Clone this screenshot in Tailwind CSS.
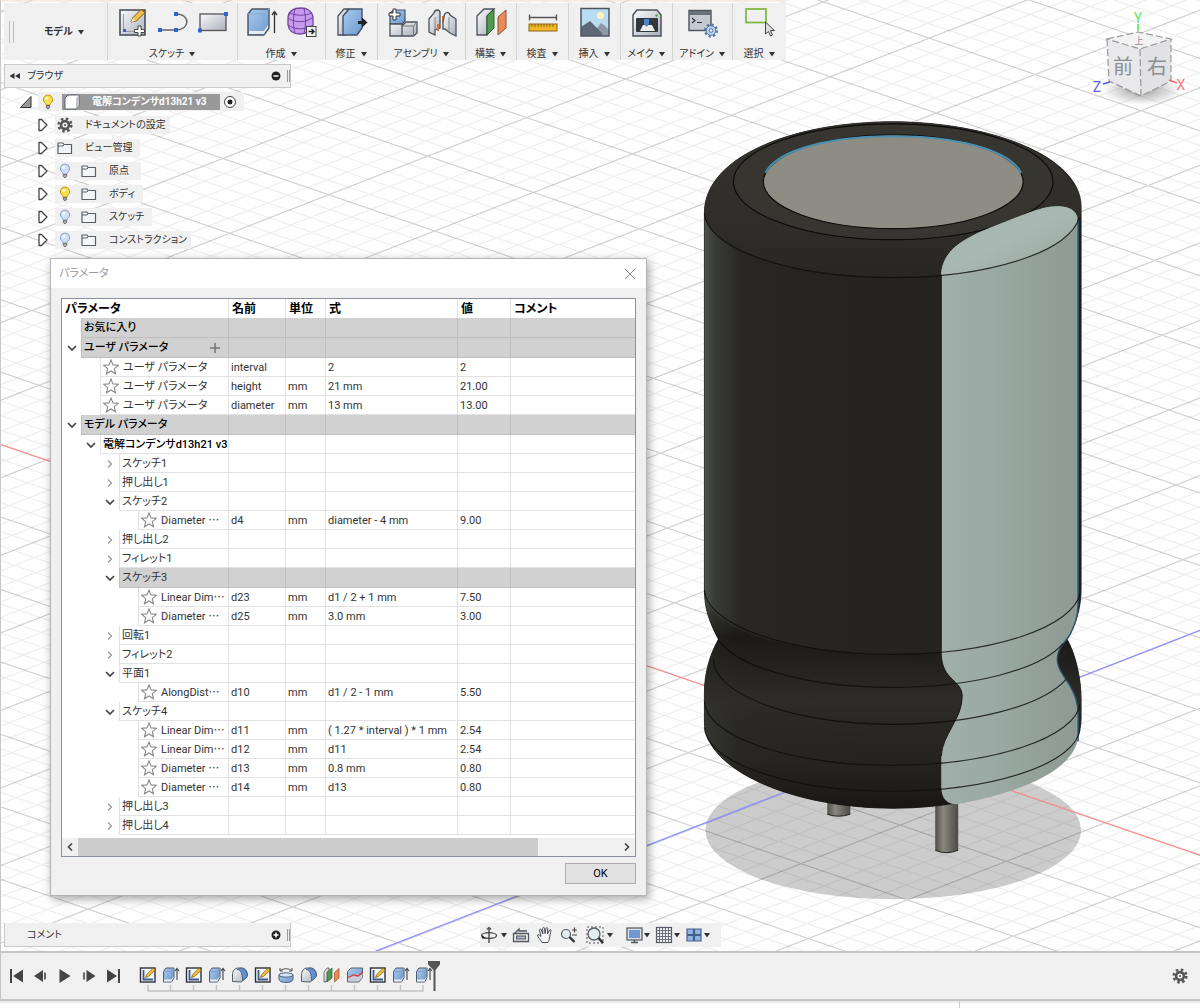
<!DOCTYPE html>
<html lang="ja">
<head>
    <meta charset="UTF-8">
    <meta name="viewport" content="width=device-width, initial-scale=1">
    <title>電解コンデンサd13h21 v3</title>
    <script src="https://cdn.jsdelivr.net/npm/@tailwindcss/browser@4"></script>
</head>
<body class="h-screen min-h-[960px] flex flex-col overflow-hidden bg-white text-[10px] leading-none text-[#333] font-['Roboto','Noto_Sans_CJK_JP',sans-serif] [font-feature-settings:'palt']">

<!-- shared icons -->
<svg class="absolute w-0 h-0" aria-hidden="true">
    <defs>
        <linearGradient id="steel" x1="0" y1="0" x2="1" y2="1"><stop offset="0" stop-color="#fbfbfc"/><stop offset="1" stop-color="#a9afba"/></linearGradient>
        <linearGradient id="blue" x1="0" y1="0" x2="1" y2="1"><stop offset="0" stop-color="#a9caee"/><stop offset="1" stop-color="#6e9acf"/></linearGradient>
    </defs>
    <symbol id="caret" viewBox="0 0 8 6"><path d="M1 1h6L4 5.500z" fill="#333"/></symbol>
    <symbol id="star" viewBox="0 0 16 16"><path d="M8 1l2 4.900 5.300.4-4 3.400 1.200 5.100L8 12l-4.500 2.800 1.200-5.100-4-3.400 5.300-.4z" fill="#fff" stroke="#8a8a8a" stroke-width="1.100"/></symbol>
    <symbol id="tri" viewBox="0 0 12 14"><path d="M2 1.500v11h2.500L10 7 4.500 1.500z" fill="#fff" stroke="#444" stroke-width="1.300" stroke-linejoin="round"/></symbol>
    <symbol id="folder" viewBox="0 0 16 14"><path d="M1 12.500V2h5l1 1.500h7.500v9z" fill="#f4f5f7" stroke="#5a6068" stroke-width="1.200" stroke-linejoin="round"/><path d="M1 5h5l1.500-1.500" fill="none" stroke="#5a6068"/></symbol>
    <symbol id="bulb-on" viewBox="0 0 12 16"><path d="M6 1a4.600 4.600 0 0 0-2.500 8.500l.6 1.500h3.800l.6-1.500A4.600 4.600 0 0 0 6 1z" fill="#f7df4e" stroke="#c39a1c"/><circle cx="4.700" cy="4.300" r="1.500" fill="#fffbd5"/><path d="M4.300 11.500h3.400v2L6 15l-1.700-1.500z" fill="#999" stroke="#555" stroke-width=".7"/></symbol>
    <symbol id="bulb-off" viewBox="0 0 12 16"><path d="M6 1a4.600 4.600 0 0 0-2.500 8.500l.6 1.500h3.800l.6-1.500A4.600 4.600 0 0 0 6 1z" fill="#cfdffa" stroke="#8a9fcb"/><circle cx="4.700" cy="4.300" r="1.500" fill="#fff"/><path d="M4.300 11.500h3.400v2L6 15l-1.700-1.500z" fill="#aaa" stroke="#555" stroke-width=".7"/></symbol>
    <symbol id="gear" viewBox="0 0 16 16"><circle cx="8" cy="8" r="6.300" fill="none" stroke="#555" stroke-width="2.600" stroke-dasharray="2.500 2.450"/><circle cx="8" cy="8" r="3.900" fill="none" stroke="#555" stroke-width="2.600"/><circle cx="8" cy="8" r="1" fill="#555"/></symbol>
    <symbol id="t-sketch" viewBox="0 0 18 18"><rect x="1.500" y="2" width="14.500" height="14" fill="#f7f7f7" stroke="#2b2f38" stroke-width="1.400"/><path d="M4.500 4v9.500H14" fill="none" stroke="#3a5b88" stroke-width="1.800"/><path d="M6.500 11.500l1-2.800L14.300 2l2 2-6.900 6.600z" fill="#f5c431" stroke="#6b4a12" stroke-width=".7"/></symbol>
    <symbol id="t-extrude" viewBox="0 0 18 18"><path d="M1.500 5.500L4 2h8v9.500L9.500 16h-8z" fill="url(#blue)" stroke="#4f5b6b"/><path d="M1.500 5.500h8L12 2M9.500 5.500V16" fill="none" stroke="#7d9cc4" stroke-width=".8"/><path d="M2 13.500h7.500l2-3v1L9.300 15.500H2z" fill="#eceef2"/><path d="M15 14V3m-2 2l2-2.500L17 5" fill="none" stroke="#444" stroke-width="1.100"/></symbol>
    <symbol id="t-fillet" viewBox="0 0 18 18"><path d="M1.500 15.500V9c0-4 2-7 6-7h3c4 0 6 3.500 6 7.500L14 13l-4 3z" fill="url(#steel)" stroke="#555c68"/><path d="M6 3.500C10 4 11.500 8 11.500 14.500l4.500-3.500c.5-5-2-8.500-6-9z" fill="#5f92cf" stroke="#3e5d89" stroke-width=".8"/></symbol>
    <symbol id="t-revolve" viewBox="0 0 18 18"><path d="M2 9v4c0 2 3 3.500 7 3.500s7-1.500 7-3.500V9z" fill="url(#blue)" stroke="#475e7d"/><ellipse cx="9" cy="9" rx="7" ry="2.200" fill="#d4e3f5" stroke="#475e7d"/><path d="M3 5c2-3 10-3 12 0M3 2v3h3M15 2v3h-3" fill="none" stroke="#555"/></symbol>
    <symbol id="t-plane" viewBox="0 0 18 18"><path d="M1 6l3-4h2v10l-3 4H1z" fill="url(#steel)" stroke="#555" stroke-width=".8"/><path d="M4 6l5-4v10l-5 4z" fill="#4f9a4d" stroke="#38683a" stroke-width=".8"/><path d="M11.500 6.500l4.500-4v9.500l-4.500 4z" fill="#ea8a57" stroke="#a65a32" stroke-width=".8"/></symbol>
    <symbol id="t-split" viewBox="0 0 18 18"><path d="M1.500 5.500L5 2h11.500v9.500L13 16H1.500z" fill="url(#blue)" stroke="#56606f"/><path d="M2 11l3.500 0 3-2 4 2 4-4v4.500L13 15.500H2z" fill="#c8ccd4"/><path d="M1.500 11c4 1 4-3 7-2s4 2 8-3" fill="none" stroke="#dd3a33" stroke-width="1.300"/></symbol>
</svg>

<main class="relative flex-1 min-h-0 flex flex-col overflow-hidden border-l border-[#c8c8c8]">
    <!-- 3D viewport -->
    <svg class="absolute inset-0 w-full h-full" viewBox="0 0 1200 952" preserveAspectRatio="xMidYMid slice" aria-label="電解コンデンサ">
        <defs>
            <pattern id="grid" width="100" height="100" patternUnits="userSpaceOnUse" patternTransform="matrix(1.060 .363 .99 -.386 893 751)">
                <path d="M20 0V100M40 0V100M60 0V100M80 0V100M0 20H100M0 40H100M0 60H100M0 80H100" stroke="#000" stroke-opacity=".065" stroke-width="1.500"/>
                <path d="M0 0V100M100 0V100M0 0H100M0 100H100" stroke="#000" stroke-opacity=".16" stroke-width="1.800"/>
            </pattern>
            <linearGradient id="dark"><stop offset="0" stop-color="#50544c"/><stop offset=".025" stop-color="#3b3d37"/><stop offset=".09" stop-color="#292825"/><stop offset=".2" stop-color="#262522"/><stop offset="1" stop-color="#232220"/></linearGradient>
            <linearGradient id="cap" x1="0" y1="0" x2="0" y2="1"><stop offset="0" stop-color="#35332e"/><stop offset=".7" stop-color="#2f2d29"/><stop offset="1" stop-color="#272623"/></linearGradient>
            <linearGradient id="belt" x1="0" y1="0" x2="0" y2="1"><stop offset="0" stop-color="#232220" stop-opacity="0"/><stop offset=".2" stop-color="#181715" stop-opacity=".8"/><stop offset=".5" stop-color="#2e2d2a" stop-opacity=".9"/><stop offset=".75" stop-color="#262522" stop-opacity=".4"/><stop offset="1" stop-color="#151412" stop-opacity=".9"/></linearGradient>
            <linearGradient id="stripe"><stop offset="0" stop-color="#a1afab"/><stop offset=".35" stop-color="#9caaa5"/><stop offset=".75" stop-color="#92a099"/><stop offset="1" stop-color="#8e9a94"/></linearGradient>
            <linearGradient id="stripe-top" x1="0" y1="0" x2="1" y2="1"><stop offset="0" stop-color="#a3b2ad"/><stop offset=".5" stop-color="#a9b8b2"/><stop offset="1" stop-color="#93a19a"/></linearGradient>
            <linearGradient id="pin" gradientUnits="userSpaceOnUse" x1="0" x2="23" spreadMethod="pad"><stop offset="0" stop-color="#504f4a"/><stop offset=".35" stop-color="#8a8880"/><stop offset="1" stop-color="#4a4944"/></linearGradient>
        </defs>
        <rect width="1200" height="952" fill="#fefefe"/>
        <ellipse cx="893" cy="831" rx="188" ry="69" fill="#ccc"/>
        <rect width="1200" height="952" fill="url(#grid)"/>
        <path d="M0 445L1200 856" stroke="#ff8f8f" stroke-width="1.200"/>
        <path d="M375 952L1200 631" stroke="#9090ff" stroke-width="1.200"/>
        <path d="M0 1h786" stroke="#f7d9d0"/>

        <g transform="translate(827 0)"><path d="M0 800v15q11 4 23 0v-15z" fill="url(#pin)"/><path d="M0 815q11 4 23 0" fill="none" stroke="#222"/></g>
        <g transform="translate(935 0)"><path d="M0 800v51q11 5 23 0v-51z" fill="url(#pin)"/><path d="M0 851q11 5 23 0" fill="none" stroke="#222"/></g>
        <path d="M704 213C704 156 795 122 892 122S1081 156 1081 207V590C1081 610 1075 626 1067 640C1076 656 1081 680 1081 700V720C1081 770 995 809 893 809S704 770 704 723V693C704 675 709 656 718 640C709 622 704 610 704 590z" fill="url(#dark)" stroke="#111" stroke-width=".8"/>
        <path d="M704 213C704 156 795 122 892 122S1081 156 1081 210C1081 247 997 278 893 278S704 247 704 213z" fill="url(#cap)"/>
        <path d="M705 594C708 631 790 655 893 655S1078 631 1081 594C1080 612 1075 626 1067 640C1076 656 1081 680 1081 700V720C1081 770 995 809 893 809S704 770 704 723V693C704 675 709 656 718 640C709 624 705 610 705 594z" fill="url(#belt)"/>
        <ellipse cx="893" cy="182" rx="160" ry="58" fill="#363530" stroke="#0b0b0a" stroke-width="1.200"/>
        <ellipse cx="893" cy="182" rx="130" ry="47" fill="#8e8d84" stroke="#0e0e0c" stroke-width="1.200"/>
        <path d="M765 173C778 149 832 136.500 893 136.500S1008 149 1021 173" fill="none" stroke="#4a8fb0" stroke-width="2"/>

        <path d="M941 275C942 250 965 238 990 228C1015 219 1032 210 1050 207C1064 205 1078 208 1078 224V600C1078 614 1077 621 1070 635C1066 642 1060 646 1058 654C1055 664 1060 672 1067 682C1075 694 1078 703 1078 716V738C1074 772 1018 794 957 805C947 805 941 800 941 787V757C942 735 962 720 962 697C962 680 942 682 941 655z" fill="url(#stripe)"/>
        <path d="M941 275C942 250 965 238 990 228C1015 219 1032 210 1050 207C1064 205 1078 208 1078 222C1066 248 1010 270 941 275z" fill="url(#stripe-top)"/>
        <path d="M941 655C942 682 962 680 962 697C962 720 942 735 941 757M941 275V655" fill="none" stroke="#171614"/>
        <path d="M1078 218V600C1078 614 1077 621 1070 635C1066 642 1060 646 1058 654C1055 664 1060 672 1067 682C1075 694 1078 703 1078 716V742" fill="none" stroke="#2b5468" stroke-width="1.400"/>
        <g fill="none" stroke="#0d0d0c" stroke-opacity=".8" stroke-width="1.200">
            <path d="M704 213A188.500 66 0 0 0 893 278A188.500 66 0 0 0 1079 218"/>
            <path d="M704 590A188 66 0 0 0 893 655A188 66 0 0 0 1080 594"/>
            <path d="M718 640A176 61 0 0 0 893 688A176 61 0 0 0 1063 644"/>
            <path d="M713 660A181 65 0 0 0 893 725A181 65 0 0 0 1066 680"/>
            <path d="M704 702A188 65 0 0 0 893 766A188 65 0 0 0 1080 705"/>
            <path d="M704 728A188 65 0 0 0 893 792A188 65 0 0 0 1080 730"/>
        </g>
    </svg>

    <!-- view cube -->
    <svg class="absolute top-2 right-2 w-[104px] h-[104px] font-['Noto_Sans_CJK_JP',sans-serif]" viewBox="1088 8 104 104">
        <defs><radialGradient id="cs"><stop offset="0" stop-opacity=".35"/><stop offset="1" stop-opacity="0"/></radialGradient></defs>
        <ellipse cx="1142" cy="91" rx="40" ry="14" fill="url(#cs)"/>
        <path d="M1107 39L1138 32L1171 39L1140 49z" fill="#f3f3f3"/>
        <path d="M1107 39L1140 49L1141 96L1109 81z" fill="#e9e9eb"/>
        <path d="M1171 39L1140 49L1141 96L1171 81z" fill="#e2e2e4"/>
        <path d="M1107 39L1138 32L1171 39L1140 49zM1107 39L1109 81L1141 96L1171 81V39M1140 49L1141 96" fill="none" stroke="#999" stroke-width="1.200" stroke-dasharray="7 3"/>
        <path d="M1138 24v7" stroke="#4be34b" stroke-width="1.500"/>
        <path d="M1103 84l7-2" stroke="#5353f2" stroke-width="1.500"/>
        <path d="M1169 80l8 3" stroke="#f27070" stroke-width="1.500"/>
        <g text-anchor="middle" fill="#8b8e93">
            <text x="1123" y="74" font-size="20">前</text>
            <text x="1157" y="74" font-size="20">右</text>
            <text x="1139" y="44" font-size="9">上</text>
        </g>
        <g text-anchor="middle" font-size="14" font-family="Roboto">
            <text x="1138" y="23" fill="#5fe85f">Y</text>
            <text x="1097" y="92" fill="#5f5ff5">Z</text>
            <text x="1181" y="90" fill="#f57a7a">X</text>
        </g>
    </svg>

    <!-- toolbar -->
    <nav class="relative self-start flex h-[57px] mt-[3px] ml-[3px] bg-[#f0f0f0] divide-x divide-[#d4d4d4]">
        <div class="w-[104px] flex items-center pl-[5px]">
            <span class="w-[5px] h-[22px] border-x border-[#bbb]"></span>
            <button class="flex-1 flex items-center justify-center gap-1 pl-2 font-bold">モデル <svg class="w-2 h-1.5"><use href="#caret"/></svg></button>
        </div>
        <div class="w-[130px] flex flex-col items-center justify-between pt-1 pb-px">
            <div class="flex gap-2">
                <button aria-label="スケッチを作成"><svg class="w-8 h-8" viewBox="0 0 32 32"><rect x="3" y="3" width="25" height="25" fill="url(#steel)" stroke="#4c525c" stroke-width="1.600"/><path d="M6.500 7v17.500H24" fill="none" stroke="#999"/><rect x="6" y="22" width="3" height="3" fill="#2d62c8"/><path d="M14 15l2-4.500 8-8 4 3-8.500 8.500z" fill="#f4c04c" stroke="#80571d"/><path d="M14 15l4.500-1-2.500-3z" fill="#fff1cc"/><path d="M21 19h3v3.500h3.500v3H24V29h-3v-3.500h-3.500v-3H21z" fill="#fff" stroke="#444"/></svg></button>
                <button aria-label="線分"><svg class="w-8 h-8" viewBox="0 0 32 32"><path d="M3 23h16.500M19 7c15 0 14 16 0 16" fill="none" stroke="#666" stroke-width="1.500"/><path d="M1 21h4v4H1zM17 21h4v4h-4zM17 5h4v4h-4z" fill="#2d66d0"/></svg></button>
                <button aria-label="長方形"><svg class="w-8 h-8" viewBox="0 0 32 32"><rect x="3" y="7" width="26" height="16.500" fill="url(#steel)" stroke="#555" stroke-width="1.300"/><path d="M27 5h4v4h-4zM1 21.500h4v4H1z" fill="#2d66d0"/></svg></button>
            </div>
            <button class="flex items-center gap-1">スケッチ <svg class="w-2 h-1.5"><use href="#caret"/></svg></button>
        </div>
        <div class="w-[88px] flex flex-col items-center justify-between pt-1 pb-px">
            <div class="flex gap-2">
                <button aria-label="押し出し"><svg class="w-8 h-8" viewBox="0 0 32 32"><path d="M2 7l4-5h17v19l-5 7H2z" fill="url(#blue)" stroke="#485567" stroke-width="1.400"/><path d="M2 7h16l5-5M18 7v21" fill="none" stroke="#86a7d0"/><path d="M3 24h15l4-6v3l-4.500 6H3z" fill="#e9ebef"/><path d="M28.500 26V5m-2.500 3l2.500-3.500L31 8" fill="none" stroke="#333" stroke-width="1.300"/></svg></button>
                <button aria-label="フォームを作成"><svg class="w-8 h-8" viewBox="0 0 32 32"><path d="M2 10C3 3 9 1 15 1s11 3 12 9v8c-1 6-7 9-13 9S3 25 2 18z" fill="#c79af0" stroke="#70459c" stroke-width="1.300"/><path d="M2 11c6 5 19 5 25-1M2 18c6 5 19 5 25 0M9 2c-2 7-2 18 0 24M18 1.500c2 7 2 18 0 25M4 6c6 3 16 3 21 0" fill="none" stroke="#70459c"/><rect x="20.500" y="19.500" width="9.500" height="10" fill="#eee" stroke="#444"/><path d="M22.500 24.500h5m-2-2.500l2.500 2.500-2.500 2.500" fill="none" stroke="#222" stroke-width="1.400"/></svg></button>
            </div>
            <button class="flex items-center gap-1">作成 <svg class="w-2 h-1.5"><use href="#caret"/></svg></button>
        </div>
        <div class="w-[52px] flex flex-col items-center justify-between pt-1 pb-px">
            <button aria-label="プレス/プル"><svg class="w-8 h-8" viewBox="0 0 32 32"><path d="M2 9l6-7h4L9 9v19H2z" fill="url(#steel)" stroke="#4c525c" stroke-width="1.300"/><path d="M7 9l6-7h13v19l-5 7H7z" fill="url(#blue)" stroke="#42536b" stroke-width="1.400"/><path d="M22 14h4v-3.500l5.500 5-5.500 5V17h-4z" fill="#222"/></svg></button>
            <button class="flex items-center gap-1">修正 <svg class="w-2 h-1.5"><use href="#caret"/></svg></button>
        </div>
        <div class="w-[88px] flex flex-col items-center justify-between pt-1 pb-px">
            <div class="flex gap-2">
                <button aria-label="新規コンポーネント"><svg class="w-8 h-8" viewBox="0 0 32 32"><path d="M4 6l4-3h11v11l-3 3H4z" fill="url(#blue)" stroke="#42536b" stroke-width="1.200"/><path d="M4 17h12v12H4zM16 19l4-4h11v11l-3.500 3H16z" fill="url(#steel)" stroke="#4c525c" stroke-width="1.300"/><path d="M16 19h11.500l3.500-4M27.500 19v10" fill="none" stroke="#777"/><path d="M7 2h3v4h4v3h-4v4H7V9H3V6h4z" fill="#fff" stroke="#333"/></svg></button>
                <button aria-label="ジョイント"><svg class="w-8 h-8" viewBox="0 0 32 32"><path d="M3 12l5-6c1-4 6-4 6 0v15l-5 2v5l-6-3z" fill="url(#steel)" stroke="#4c525c" stroke-width="1.300"/><path d="M9 10v16" stroke="#888"/><path d="M12 17v7M17 9v7" stroke="#e5742a" stroke-width="2"/><path d="M18 10c0-5 5-6 6-2l6 4v17l-6-3-5-4h-2v-7z" fill="url(#steel)" stroke="#4c525c" stroke-width="1.300"/><path d="M23 10v15" stroke="#888"/></svg></button>
            </div>
            <button class="flex items-center gap-1">アセンブリ <svg class="w-2 h-1.5"><use href="#caret"/></svg></button>
        </div>
        <div class="w-[51px] flex flex-col items-center justify-between pt-1 pb-px">
            <button aria-label="オフセット平面"><svg class="w-8 h-8" viewBox="0 0 32 32"><path d="M2 9l7-7h10l-7 7v19H2z" fill="url(#steel)" stroke="#4c525c" stroke-width="1.300"/><path d="M12 9l7-7v19l-7 7z" fill="#4f9a4d" stroke="#2e5c30"/><path d="M23 10l8-7v18l-8 7z" fill="#ea8a57" stroke="#8b5030"/></svg></button>
            <button class="flex items-center gap-1">構築 <svg class="w-2 h-1.5"><use href="#caret"/></svg></button>
        </div>
        <div class="w-[52px] flex flex-col items-center justify-between pt-1 pb-px">
            <button aria-label="計測"><svg class="w-8 h-8" viewBox="0 0 32 32"><path d="M2.500 10.500h27M2.500 7.500v6M29.500 7.500v6" stroke="#555" stroke-width="1.400"/><rect x="2" y="17" width="28" height="7" fill="#f0b92c" stroke="#8a6413"/><path d="M5 17v3M8 17v3M11 17v3M14 17v3M17 17v3M20 17v3M23 17v3M26 17v3" stroke="#8a6413"/></svg></button>
            <button class="flex items-center gap-1">検査 <svg class="w-2 h-1.5"><use href="#caret"/></svg></button>
        </div>
        <div class="w-[52px] flex flex-col items-center justify-between pt-1 pb-px">
            <button aria-label="キャンバス"><svg class="w-8 h-8" viewBox="0 0 32 32"><rect x="2" y="1.500" width="28" height="27.500" fill="#b9dcf0"/><circle cx="21.500" cy="8.500" r="3.500" fill="#fdf2b8"/><path d="M15 25l7-9 3 2 5 5v6H15z" fill="#8e98a5"/><path d="M2 20l9-6 12 12v3H2z" fill="#5c6876"/><rect x="2" y="1.500" width="28" height="27.500" fill="none" stroke="#4c5662" stroke-width="1.500"/></svg></button>
            <button class="flex items-center gap-1">挿入 <svg class="w-2 h-1.5"><use href="#caret"/></svg></button>
        </div>
        <div class="w-[52px] flex flex-col items-center justify-between pt-1 pb-px">
            <button aria-label="3D プリント"><svg class="w-8 h-8" viewBox="0 0 32 32"><path d="M2 8l4-5h20l4 5v21H2z" fill="url(#steel)" stroke="#4c525c" stroke-width="1.500"/><rect x="5" y="11" width="22" height="14" rx="1" fill="#33373d"/><path d="M9 24l3-6h9l3 6z" fill="#eceef0"/><path d="M13 12h5v5l-2.500 3-2.500-3z" fill="#4a86cc"/><circle cx="25.500" cy="8.500" r="1.200" fill="#3fae3f"/></svg></button>
            <button class="flex items-center gap-1">メイク <svg class="w-2 h-1.5"><use href="#caret"/></svg></button>
        </div>
        <div class="w-[60px] flex flex-col items-center justify-between pt-1 pb-px">
            <button aria-label="スクリプトとアドイン"><svg class="w-8 h-8" viewBox="0 0 32 32"><rect x="2" y="3.500" width="22" height="20" fill="#c5c9d1" stroke="#4c525c" stroke-width="1.400"/><path d="M2 4h22v4H2z" fill="#6a7079"/><path d="M5 11l3 2.500L5 16M10 15.500h5" fill="none" stroke="#333" stroke-width="1.200"/><circle cx="24" cy="23.500" r="5.800" fill="none" stroke="#5679a8" stroke-width="2.400" stroke-dasharray="2.300 2.200"/><circle cx="24" cy="23.500" r="4.800" fill="#b6cfee" stroke="#5679a8"/><circle cx="24" cy="23.500" r="1.800" fill="#f0f0f0" stroke="#5679a8"/></svg></button>
            <button class="flex items-center gap-1">アドイン <svg class="w-2 h-1.5"><use href="#caret"/></svg></button>
        </div>
        <div class="w-[53px] flex flex-col items-center justify-between pt-1 pb-px">
            <button aria-label="選択"><svg class="w-8 h-8" viewBox="0 0 32 32"><rect x="2" y="2" width="20" height="13.500" fill="none" stroke="#7cb53a" stroke-width="1.700"/><path d="M21.500 15v12l3-2.500 2 4.500 2-1-2-4.500h4z" fill="#ddd" stroke="#444"/></svg></button>
            <button class="flex items-center gap-1">選択 <svg class="w-2 h-1.5"><use href="#caret"/></svg></button>
        </div>
    </nav>

    <!-- browser panel -->
    <section class="relative w-[287px] mt-1 ml-[3px]">
        <header class="h-[24px] flex items-center pl-1 bg-[#f0f0f0] border border-[#c9c9c9]">
            <button aria-label="折りたたむ"><svg class="w-3 h-3" viewBox="0 0 12 12"><path d="M5.500 3v6L.5 6zM11 3v6L6 6z" fill="#333"/></svg></button>
            <h2 class="ml-1.5 flex-1">ブラウザ</h2>
            <button aria-label="表示設定"><svg class="w-2.5 h-2.5" viewBox="0 0 10 10"><circle cx="5" cy="5" r="4.500" fill="#222"/><path d="M2.500 5h5" stroke="#fff" stroke-width="1.500"/></svg></button>
            <span class="ml-1.5 w-[3px] h-3 border-x border-[#999]"></span>
        </header>
        <ul class="pt-[2px]">
            <li class="h-[23px] flex items-center gap-1.5 pl-4">
                <svg class="w-3 h-3" viewBox="0 0 12 12"><path d="M.5 11.500L11 .5v11z" fill="#999" stroke="#333"/></svg>
                <div class="h-[19px] flex items-center pl-1 pr-2 bg-[#f0f0f0]">
                    <svg class="w-3 h-4 mr-2"><use href="#bulb-on"/></svg>
                    <button class="h-4 w-[158px] flex items-center bg-[#999] text-white font-bold">
                        <svg class="w-4 h-4 ml-0.5 mr-3" viewBox="0 0 16 16"><path d="M1 4l3-3h11v10.500L12 15H1z" fill="#fff" stroke="#5b6068"/><path d="M12 15V4l3-3v10.500z" fill="#bfc4cc"/></svg>
                        電解コンデンサd13h21 v3
                    </button>
                    <input type="radio" checked aria-label="コンポーネントをアクティブ化" class="ml-1 w-3 h-3 appearance-none rounded-full border border-[#444] bg-[radial-gradient(#222_30%,#fff_40%)]">
                </div>
            </li>
            <li class="h-[23px] flex items-center gap-1.5 pl-[33px]">
                <svg class="w-3 h-3.5"><use href="#tri"/></svg>
                <div class="h-[18px] flex items-center pl-0.5 pr-1 bg-[#f0f0f0]"><svg class="w-4 h-4 mr-3"><use href="#gear"/></svg>ドキュメントの設定</div>
            </li>
            <li class="h-[23px] flex items-center gap-1.5 pl-[33px]">
                <svg class="w-3 h-3.5"><use href="#tri"/></svg>
                <div class="h-[18px] flex items-center pl-0.5 pr-2 bg-[#f0f0f0]"><svg class="w-4 h-3.5 mr-3"><use href="#folder"/></svg>ビュー管理</div>
            </li>
            <li class="h-[23px] flex items-center gap-1.5 pl-[33px]">
                <svg class="w-3 h-3.5"><use href="#tri"/></svg>
                <div class="h-[18px] flex items-center pl-1 pr-3 bg-[#f0f0f0]"><svg class="w-3 h-4 mr-2.5"><use href="#bulb-off"/></svg><svg class="w-4 h-3.5 mr-3"><use href="#folder"/></svg>原点</div>
            </li>
            <li class="h-[23px] flex items-center gap-1.5 pl-[33px]">
                <svg class="w-3 h-3.5"><use href="#tri"/></svg>
                <div class="h-[18px] flex items-center pl-1 pr-2 bg-[#f0f0f0]"><svg class="w-3 h-4 mr-2.5"><use href="#bulb-on"/></svg><svg class="w-4 h-3.5 mr-3"><use href="#folder"/></svg>ボディ</div>
            </li>
            <li class="h-[23px] flex items-center gap-1.5 pl-[33px]">
                <svg class="w-3 h-3.5"><use href="#tri"/></svg>
                <div class="h-[18px] flex items-center pl-1 pr-2 bg-[#f0f0f0]"><svg class="w-3 h-4 mr-2.5"><use href="#bulb-off"/></svg><svg class="w-4 h-3.5 mr-3"><use href="#folder"/></svg>スケッチ</div>
            </li>
            <li class="h-[23px] flex items-center gap-1.5 pl-[33px]">
                <svg class="w-3 h-3.5"><use href="#tri"/></svg>
                <div class="h-[18px] flex items-center pl-1 pr-1 bg-[#f0f0f0]"><svg class="w-3 h-4 mr-2.5"><use href="#bulb-off"/></svg><svg class="w-4 h-3.5 mr-3"><use href="#folder"/></svg>コンストラクション</div>
            </li>
        </ul>
    </section>

    <!-- comments and navigation bars -->
    <div class="relative mt-auto grid grid-cols-[1fr_auto_1fr] pl-[3px] pr-1 pb-1">
        <section class="w-[287px] h-[24px] flex items-center pl-[22px] bg-[#f0f0f0] border border-t-0 border-[#c9c9c9]">
            <h2 class="flex-1">コメント</h2>
            <button aria-label="コメントを追加"><svg class="w-2.5 h-2.5" viewBox="0 0 10 10"><circle cx="5" cy="5" r="4.500" fill="#222"/><path d="M2.500 5h5M5 2.500v5" stroke="#fff" stroke-width="1.500"/></svg></button>
            <span class="ml-1.5 w-[3px] h-3 border-x border-[#999]"></span>
        </section>
        <nav class="w-[241px] h-[24px] flex items-center bg-[#f0f0f0]">
            <button class="flex items-center" aria-label="オービット"><svg class="w-[18px] h-[18px]" viewBox="0 0 18 18"><path d="M9 1.500V17M7 3.500l2-2 2 2" fill="none" stroke="#555" stroke-width="1.500"/><ellipse cx="9" cy="9.500" rx="7.500" ry="2.800" fill="none" stroke="#444" stroke-width="1.200"/><path d="M2 9l4 3.500H2z" fill="#222"/></svg><svg class="w-2 h-1.5 ml-0.5"><use href="#caret"/></svg></button>
            <button class="ml-1" aria-label="ビュー正面"><svg class="w-[18px] h-[18px]" viewBox="0 0 18 18"><path d="M1.500 7.500h15v8h-15zM3 7l4-4v2h8" fill="#eee" stroke="#505761" stroke-width="1.300"/><rect x="4.500" y="10" width="9" height="3" fill="#aeb6c2" stroke="#505761"/></svg></button>
            <button class="ml-1.5" aria-label="画面移動"><svg class="w-[18px] h-[18px]" viewBox="0 0 18 18"><path d="M6 16.500C4 13 1.500 11 1.500 9c1-1 2.500.5 3.500 1.500L3.500 4c0-1 1.500-1.200 1.800-.3L6.800 8 6.700 2.300c.2-1.200 1.700-1 1.800 0L9 7.500l1-5.200c.3-1 1.800-.8 1.700.3L11.500 8l2-4c.5-.9 1.700-.3 1.500.6-.7 3-1.200 5-1.500 7.500-.2 2-1 3-1.500 4.400z" fill="#f6f6f6" stroke="#484d55"/></svg></button>
            <button class="ml-1.5" aria-label="ズーム"><svg class="w-[18px] h-[18px]" viewBox="0 0 18 18"><circle cx="6" cy="8" r="4.500" fill="#e3eef0" stroke="#555c66" stroke-width="1.200"/><path d="M9.500 11l5 5" stroke="#333" stroke-width="2.400"/><path d="M14.500 1.500v5M12 4h5M12 9h5" stroke="#444" stroke-width="1.200"/></svg></button>
            <button class="ml-2 flex items-center" aria-label="フィット"><svg class="w-[18px] h-[18px]" viewBox="0 0 18 18"><path d="M1 1h16v16H1z" fill="none" stroke="#555" stroke-dasharray="2 2"/><circle cx="8" cy="8" r="6" fill="#e3efee" stroke="#555c66" stroke-width="1.300"/><path d="M12.500 12l4.500 5" stroke="#333" stroke-width="2.600"/></svg><svg class="w-2 h-1.5 ml-0.5"><use href="#caret"/></svg></button>
            <button class="ml-3 flex items-center" aria-label="表示設定"><svg class="w-[17px] h-[18px]" viewBox="0 0 17 18"><rect x="1" y="2" width="15" height="12" fill="#dcdfe4" stroke="#4f5661" stroke-width="1.200"/><rect x="3" y="4" width="11" height="8" fill="#6d9ad2"/><path d="M5 16.500h7M8.500 14v2" stroke="#4f5661" stroke-width="1.500"/></svg><svg class="w-2 h-1.5"><use href="#caret"/></svg></button>
            <button class="ml-1 flex items-center" aria-label="グリッドとスナップ"><svg class="w-[18px] h-[18px]" viewBox="0 0 18 18"><rect x="1.500" y="1.500" width="15" height="15" fill="#f2f3f5" stroke="#50555e" stroke-width="1.200"/><path d="M4.500 1v16M7.500 1v16M10.500 1v16M13.500 1v16M1 4.500h16M1 7.500h16M1 10.500h16M1 13.500h16" stroke="#6a707a"/></svg><svg class="w-2 h-1.5"><use href="#caret"/></svg></button>
            <button class="ml-1 flex items-center" aria-label="ビューポート"><svg class="w-[18px] h-[18px]" viewBox="0 0 18 18"><path d="M2 3h6.500v5.500H2zM9.500 3H16v5.500H9.500zM2 9.500h6.500V15H2zM9.500 9.500H16V15H9.500z" fill="#8fb4e2" stroke="#46608a" stroke-width="1.200"/></svg><svg class="w-2 h-1.5"><use href="#caret"/></svg></button>
        </nav>
    </div>

    <!-- parameters window -->
    <section role="dialog" aria-labelledby="dlg-title" class="absolute left-[49px] top-[258px] w-[597px] bg-[#f0f0f0] border border-[#b4b4b4] shadow-[2px_3px_9px_rgba(0,0,0,0.35)] text-[11px]">
        <header class="h-[29px] flex items-center justify-between pl-2 pr-2.5 bg-white text-[#999]">
            <h2 id="dlg-title">パラメータ</h2>
            <button aria-label="閉じる"><svg class="w-3 h-3" viewBox="0 0 12 12"><path d="M1 1l10 10M11 1L1 11" stroke="#888"/></svg></button>
        </header>
        <div class="px-2.5 pt-2.5 pb-[11px]">
            <div class="bg-white border border-[#8a919c]">
                <table class="w-full table-fixed border-separate border-spacing-0 text-[#333]">
                    <colgroup>
                        <col class="w-[167px]"><col class="w-[57px]"><col class="w-[40px]"><col class="w-[132px]"><col class="w-[53px]"><col>
                    </colgroup>
                    <thead>
                        <tr class="h-[19px] text-left text-xs leading-none text-black">
                            <th class="p-0 pl-[3px] border-r border-[#e2e2e2]">パラメータ</th>
                            <th class="p-0 pl-[3px] border-r border-[#e2e2e2]">名前</th>
                            <th class="p-0 pl-[3px] border-r border-[#e2e2e2]">単位</th>
                            <th class="p-0 pl-[3px] border-r border-[#e2e2e2]">式</th>
                            <th class="p-0 pl-[3px] border-r border-[#e2e2e2]">値</th>
                            <th class="p-0 pl-[3px]">コメント</th>
                        </tr>
                    </thead>
                    <tbody id="params"></tbody>
                </table>
                <div class="mt-[3px] h-[18px] flex items-center bg-[#f0f0f0]">
                    <button class="w-4 h-full flex items-center justify-center" aria-label="左へスクロール"><svg class="w-2 h-2" viewBox="0 0 8 8"><path d="M6 .5L2.500 4 6 7.500" fill="none" stroke="#444" stroke-width="1.600"/></svg></button>
                    <div class="flex-1 h-full"><div class="w-[85%] h-full bg-[#cdcdcd]"></div></div>
                    <button class="w-4 h-full flex items-center justify-center" aria-label="右へスクロール"><svg class="w-2 h-2" viewBox="0 0 8 8"><path d="M2 .5L5.500 4 2 7.500" fill="none" stroke="#444" stroke-width="1.600"/></svg></button>
                </div>
            </div>
            <div class="mt-[6px] flex justify-end">
                <button class="w-[71px] h-[21px] bg-[#e1e1e1] border border-[#adadad] text-black">OK</button>
            </div>
        </div>
    </section>
</main>

<!-- timeline -->
<footer class="h-[50px] shrink-0 flex items-center pl-[7px] pr-3 bg-[#f0f0f0] border-y-2 border-l border-[#c4c4c4]">
    <div class="flex gap-1.5">
        <button aria-label="最初へ"><svg class="w-[18px] h-[18px]" viewBox="0 0 18 18"><path d="M3 2v14" stroke="#444" stroke-width="2"/><path d="M15 2.500v13L5 9z" fill="#444"/></svg></button>
        <button aria-label="前へ"><svg class="w-[18px] h-[18px]" viewBox="0 0 18 18"><path d="M11 3v12L2 9z" fill="#444"/><path d="M13 5.500v7" stroke="#444" stroke-width="1.600"/></svg></button>
        <button aria-label="再生"><svg class="w-[18px] h-[18px]" viewBox="0 0 18 18"><path d="M3.500 2v14l11-7z" fill="#444"/></svg></button>
        <button aria-label="次へ"><svg class="w-[18px] h-[18px]" viewBox="0 0 18 18"><path d="M6.500 3v12l9-6z" fill="#444"/><path d="M4 5.500v7" stroke="#444" stroke-width="1.600"/></svg></button>
        <button aria-label="最後へ"><svg class="w-[18px] h-[18px]" viewBox="0 0 18 18"><path d="M15 2v14" stroke="#444" stroke-width="2"/><path d="M3 2.500v13L13 9z" fill="#444"/></svg></button>
    </div>
    <div class="ml-[14px] flex">
        <div class="pt-1.5">
            <div id="timeline" class="flex"></div>
            <svg class="w-[299px] h-[8px]" viewBox="0 0 299 8"><path d="M12 1v6h275V1M34.500 1v6M57.500 1v6M80.500 1v6M103.500 1v6M126.500 1v6M149.500 1v6M172.500 1v6M195.500 1v6M218.500 1v6M241.500 1v6M264.500 1v6" fill="none" stroke="#c4c4c4" stroke-width="1.500"/></svg>
        </div>
        <svg class="-ml-[7px] w-3 h-[32px]" viewBox="0 0 12 32"><path d="M0 1h12v3.500L7.500 10v21h-2V10L0 4.500z" fill="#555"/></svg>
    </div>
    <button class="ml-auto" aria-label="設定"><svg class="w-4 h-4"><use href="#gear"/></svg></button>
</footer>
<div class="h-[7px] shrink-0 bg-linear-to-b from-[#e4e4e4] to-white to-50%"><div class="w-4/5 h-full border-r border-[#ccc]"></div></div>

<script>
    // level: tree depth, open: true/false for branches, undefined for leaves
    const rows = [
        { level: 1, label: 'お気に入り', group: true },
        { level: 1, label: 'ユーザ パラメータ', group: true, open: true, add: true },
        { level: 2, label: 'ユーザ パラメータ', star: true, cells: ['interval', '', '2', '2'] },
        { level: 2, label: 'ユーザ パラメータ', star: true, cells: ['height', 'mm', '21 mm', '21.00'] },
        { level: 2, label: 'ユーザ パラメータ', star: true, cells: ['diameter', 'mm', '13 mm', '13.00'] },
        { level: 1, label: 'モデル パラメータ', group: true, open: true },
        { level: 2, label: '電解コンデンサd13h21 v3', bold: true, open: true },
        { level: 3, label: 'スケッチ1', open: false },
        { level: 3, label: '押し出し1', open: false },
        { level: 3, label: 'スケッチ2', open: true },
        { level: 4, label: 'Diameter ⋯', star: true, cells: ['d4', 'mm', 'diameter - 4 mm', '9.00'] },
        { level: 3, label: '押し出し2', open: false },
        { level: 3, label: 'フィレット1', open: false },
        { level: 3, label: 'スケッチ3', open: true, selected: true },
        { level: 4, label: 'Linear Dim⋯', star: true, cells: ['d23', 'mm', 'd1 / 2 + 1 mm', '7.50'] },
        { level: 4, label: 'Diameter ⋯', star: true, cells: ['d25', 'mm', '3.0 mm', '3.00'] },
        { level: 3, label: '回転1', open: false },
        { level: 3, label: 'フィレット2', open: false },
        { level: 3, label: '平面1', open: true },
        { level: 4, label: 'AlongDist⋯', star: true, cells: ['d10', 'mm', 'd1 / 2 - 1 mm', '5.50'] },
        { level: 3, label: 'スケッチ4', open: true },
        { level: 4, label: 'Linear Dim⋯', star: true, cells: ['d11', 'mm', '( 1.27 * interval ) * 1 mm', '2.54'] },
        { level: 4, label: 'Linear Dim⋯', star: true, cells: ['d12', 'mm', 'd11', '2.54'] },
        { level: 4, label: 'Diameter ⋯', star: true, cells: ['d13', 'mm', '0.8 mm', '0.80'] },
        { level: 4, label: 'Diameter ⋯', star: true, cells: ['d14', 'mm', 'd13', '0.80'] },
        { level: 3, label: '押し出し3', open: false },
        { level: 3, label: '押し出し4', open: false },
    ];
    const indents = ['', 'w-[19px]', 'w-[38px]', 'w-[57px]', 'w-[76px]'];
    const chevrons = {
        true: '<svg class="w-2.5 h-2.5" viewBox="0 0 10 10"><path d="M1 3l4 4 4-4" fill="none" stroke="#444" stroke-width="1.700"/></svg>',
        false: '<svg class="w-2.5 h-2.5" viewBox="0 0 10 10"><path d="M3 1.500L6.500 5 3 8.500" fill="none" stroke="#999" stroke-width="1.300"/></svg>',
    };

    document.getElementById('params').innerHTML = rows.map(row => {
        const grey = row.group || row.selected;
        const fill = grey ? 'bg-[#d1d1d1] border-[#bfbfbf]' : 'border-[#e2e2e2]';
        const height = grey ? 'h-[20px]' : 'h-[19px]';
        const toggle = row.open === undefined ? '' : `<button class="w-[19px] h-full flex items-center justify-center">${chevrons[row.open]}</button>`;
        const cells = row.cells || ['', '', '', ''];
        return `
            <tr class="${height}">
                <td class="p-0">
                    <div class="flex ${height}">
                        <div class="${indents[row.level]} shrink-0 flex justify-end">${toggle}</div>
                        <div class="flex-1 min-w-0 flex items-center pl-0.5 border-l border-b border-r ${fill} whitespace-nowrap ${row.group || row.bold ? 'font-medium text-black' : ''}">
                            ${row.star ? '<svg class="w-4 h-4 mr-1 shrink-0"><use href="#star"/></svg>' : ''}
                            <span class="flex-1">${row.label}</span>
                            ${row.add ? '<button class="pr-2" aria-label="ユーザ パラメータを追加"><svg class="w-2.5 h-2.5" viewBox="0 0 10 10"><path d="M5 0v10M0 5h10" stroke="#777" stroke-width="1.600"/></svg></button>' : ''}
                        </div>
                    </div>
                </td>
                ${cells.map(text => `<td class="p-0 pl-0.5 border-r border-b ${fill} whitespace-nowrap">${text}</td>`).join('')}
                <td class="p-0 border-b ${fill}"></td>
            </tr>`;
    }).join('');

    const features = [
        ['t-sketch', 'スケッチ1'], ['t-extrude', '押し出し1'], ['t-sketch', 'スケッチ2'], ['t-extrude', '押し出し2'],
        ['t-fillet', 'フィレット1'], ['t-sketch', 'スケッチ3'], ['t-revolve', '回転1'], ['t-fillet', 'フィレット2'],
        ['t-plane', '平面1'], ['t-split', '分割1'], ['t-sketch', 'スケッチ4'], ['t-extrude', '押し出し3'], ['t-extrude', '押し出し4'],
    ];
    document.getElementById('timeline').innerHTML = features.map(([icon, name]) =>
        `<button class="w-[23px] flex justify-center" aria-label="${name}"><svg class="w-[18px] h-[18px]"><use href="#${icon}"/></svg></button>`
    ).join('');
</script>
</body>
</html>
